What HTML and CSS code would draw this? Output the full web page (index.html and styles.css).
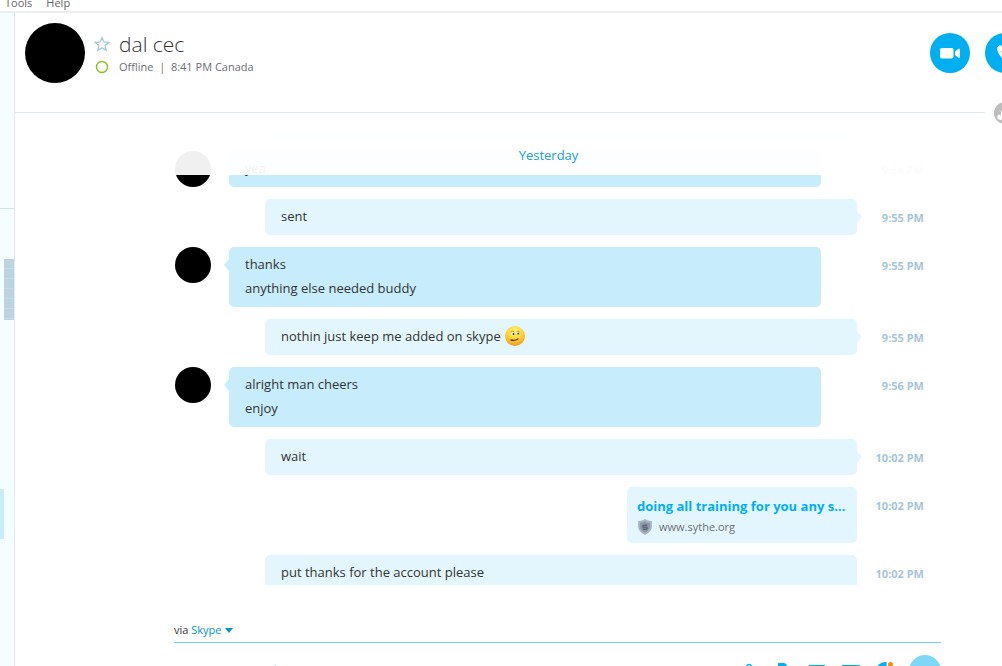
FILE: index.html
```html
<!DOCTYPE html>
<html lang="en">
<head>
<meta charset="utf-8">
<title>dal cec</title>
<link rel="stylesheet" href="styles.css">
</head>
<body>
<div class="app">
  <nav class="menubar">
    <button class="menu-item" type="button">Tools</button>
    <button class="menu-item" type="button">Help</button>
  </nav>
  <div class="workspace">
    <aside class="sidebar">
      <div class="sidebar-top"></div>
      <div class="scroll-thumb"></div>
      <div class="selected-contact"></div>
    </aside>
    <main class="chat">
      <header class="chat-header">
        <div class="avatar avatar-large"></div>
        <div class="contact">
          <svg class="mark" viewBox="0 0 16 16"><path d="M8 1.600 9.900 6l4.800.4-3.600 3.100 1.100 4.800L8 11.700l-4.200 2.600 1.100-4.800-3.600-3.100L6.100 6z" fill="none" stroke="#a5c9d9" stroke-width="1.300"/></svg>
          <h1 class="name">dal cec</h1>
          <svg class="mark" viewBox="0 0 16 16"><circle cx="8" cy="8" r="5.500" fill="none" stroke="#8cc11c" stroke-width="1.400"/></svg>
          <p class="status">Offline&nbsp; |&nbsp; 8:41 PM Canada</p>
        </div>
        <div class="calls">
          <button class="call" type="button" aria-label="Video call">
            <svg viewBox="0 0 40 40"><rect x="10" y="15" width="13.500" height="10.500" rx="1.800" fill="#fff"/><path d="M25 18.500 28.500 15.800Q30 15.500 30 16.500V24q0 1-1.500.7L25 22z" fill="#fff"/></svg>
          </button>
          <button class="call" type="button" aria-label="Call">
            <svg viewBox="0 0 40 40"><path d="M14.500 12.200c-1.800 1-2.600 2.300-2.300 4.300.8 5.500 5.500 10.500 11.300 11.500 2 .3 3.500-.6 4.300-2.300.3-.7.100-1.200-.5-1.600l-3-1.800c-.6-.4-1.200-.3-1.600.2l-1.100 1.300c-2.600-1.200-4.400-3-5.400-5.500l1.400-1.100c.5-.4.600-1 .3-1.600l-1.700-3c-.4-.6-1-.7-1.700-.4z" fill="#fff"/></svg>
          </button>
        </div>
        <svg class="badge" viewBox="0 0 22 22"><circle cx="11" cy="11" r="11" fill="#bdbdbd"/><path d="M4 17q-2-3 1-4.500l2 1V9l3-3 1 2v9q-4 2-7 0z" fill="#fff"/></svg>
      </header>

      <section class="stream" aria-label="Messages">
        <div class="day">Yesterday</div>
        <div class="row mine"><div class="bubble bubble-end"></div></div>
        <div class="row theirs"><div class="avatar"></div><div class="bubble tail-left"><p>yea</p></div><time>9:54 PM</time></div>
        <div class="row mine"><div class="bubble tail-right"><p>sent</p></div><time>9:55 PM</time></div>
        <div class="row theirs"><div class="avatar"></div><div class="bubble tail-left"><p>thanks</p><p>anything else needed buddy</p></div><time>9:55 PM</time></div>
        <div class="row mine"><div class="bubble tail-right"><p class="with-emoji">nothin just keep me added on skype
          <svg class="emoji" viewBox="0 0 20 20" role="img" aria-label="wink">
            <defs><radialGradient id="face" cx=".5" cy=".25" r=".8"><stop offset="0" stop-color="#fff27a"/><stop offset=".55" stop-color="#fdd02f"/><stop offset="1" stop-color="#ef8f1c"/></radialGradient></defs>
            <circle cx="10" cy="10" r="10" fill="url(#face)"/>
            <ellipse cx="8" cy="7.800" rx="1.900" ry="1.500" fill="#fff"/><circle cx="8.500" cy="8" r="1" fill="#39240c"/>
            <ellipse cx="13" cy="7.600" rx="1.700" ry="1.100" fill="#fff"/><circle cx="13.300" cy="7.700" r=".9" fill="#39240c"/>
            <path d="M6 14q4 .9 7-1" fill="none" stroke="#59350c" stroke-width="1.300" stroke-linecap="round"/>
            <path d="M6 5.800q1.500-1 3-.4M12 5.600q1.300-.5 2.500.2" fill="none" stroke="#a8741a" stroke-width=".7" stroke-linecap="round"/>
          </svg></p></div><time>9:55 PM</time></div>
        <div class="row theirs"><div class="avatar"></div><div class="bubble tail-left"><p>alright man cheers</p><p>enjoy</p></div><time>9:56 PM</time></div>
        <div class="row mine"><div class="bubble tail-right"><p>wait</p></div><time>10:02 PM</time></div>
        <div class="row mine">
          <div class="bubble link-card">
            <a class="link-title" href="#">doing all training for you any service</a>
            <div class="link-site">
              <svg class="shield" viewBox="0 0 16 16"><path d="M8 0q3 2.300 7 2-.3 3 0 5.500Q14.500 13 8 16 1.500 13 1 7.500 1.300 5 1 2q4 .3 7-2z" fill="#a9b4c2"/><path d="M8 2.200q2.500 1.500 5 1.500v4Q12.500 11.500 8 13.800 3.500 11.500 3 7.700v-4q2.500 0 5-1.500z" fill="#8d99ab"/><path d="M10.300 6.300H7q-1.300 0-1.300 1T7 8.200h2q1.300 0 1.300 1t-1.300 1H5.700" fill="none" stroke="#5c6678" stroke-width="1.400"/></svg>
              <span>www.sythe.org</span>
            </div>
          </div>
          <time>10:02 PM</time>
        </div>
        <div class="row mine"><div class="bubble"><p>put thanks for the account please</p></div><time>10:02 PM</time></div>
      </section>

      <footer class="composer">
        <div class="via">via <button class="via-button" type="button">Skype <svg class="caret" viewBox="0 0 8 5"><path d="M0 0h8L4 5z" fill="#0095cc"/></svg></button></div>
        <div class="entry">
          <input class="entry-box" type="text" placeholder="Type a message here" aria-label="Message">
          <div class="tools">
            <button class="tool" type="button" aria-label="Attach"><svg viewBox="0 0 20 20"><path d="M7.500 14V5a2.500 2.500 0 0 1 5 0V14" fill="none" stroke="#00aff0" stroke-width="1.300"/></svg></button>
            <button class="tool" type="button" aria-label="Contact"><svg viewBox="0 0 20 20"><path d="M5 1h6q2.500 0 3.500 4v4q0 4-4 4T6 9V4H5z" fill="#00aff0"/></svg></button>
            <button class="tool" type="button" aria-label="Picture"><svg viewBox="0 0 20 20"><rect x="2.500" y="3.500" width="15" height="12" fill="none" stroke="#00aff0"/></svg></button>
            <button class="tool" type="button" aria-label="Video message"><svg viewBox="0 0 20 20"><rect x="1.500" y="3.500" width="17" height="12" fill="none" stroke="#00aff0"/></svg></button>
            <button class="tool" type="button" aria-label="Emoticons"><svg viewBox="0 0 20 20"><circle cx="10" cy="9" r="9" fill="#00aff0"/><circle cx="15" cy="2.500" r="3.500" fill="#fff"/><circle cx="15.500" cy="2.500" r="2.500" fill="#ff8c00"/></svg></button>
          </div>
          <button class="send" type="button" aria-label="Send"></button>
        </div>
      </footer>
    </main>
  </div>
</div>
</body>
</html>
```
FILE: styles.css
```css
* { box-sizing: border-box; }
body {
  margin: 0;
  overflow: hidden;
  background: #fff;
  color: #333;
  font: 13px/24px "Open Sans", "Noto Sans", sans-serif;
}
h1, p { margin: 0; }
button, input { font: inherit; border: 0; padding: 0; background: none; }
svg { display: block; }
.app { display: flex; flex-direction: column; height: 100vh; overflow: hidden; }

.menubar {
  display: flex;
  flex: none;
  align-items: flex-end;
  gap: 14px;
  height: 13px;
  padding-left: 5px;
  border-bottom: 2px solid #eee;
  overflow: hidden;
}
.menu-item { color: #666; font-size: 11px; line-height: 16px; }

.workspace { display: flex; flex: 1; min-height: 0; }
.sidebar { flex: none; width: 15px; background: #f4fdff; border-right: 1px solid #e0eaf0; }
.sidebar-top { height: 196px; border-bottom: 1px solid #cfe6ea; }
.scroll-thumb {
  height: 61px;
  margin: 50px 0 169px 4px;
  background: repeating-linear-gradient(#bcd4e0 0 9px, #c4dbe6 9px 10px);
}
.selected-contact { width: 4px; height: 50px; background: #c7edfc; }

.chat { display: flex; flex: 1; flex-direction: column; min-width: 0; overflow: hidden; }
.chat-header {
  position: relative;
  z-index: 2;
  display: flex;
  flex: none;
  gap: 9px;
  height: 100px;
  margin-right: 17px;
  padding: 10px 0 0 10px;
  border-bottom: 1px solid #deeaf0;
}
.avatar { flex: none; width: 36px; height: 36px; border-radius: 50%; background: #000; }
.avatar-large { width: 60px; height: 60px; }
.contact {
  display: grid;
  flex: 1;
  grid-template-columns: 16px 1fr;
  grid-template-rows: 24px 22px;
  column-gap: 9px;
  align-content: start;
  align-items: center;
  padding-top: 9px;
}
.mark { width: 16px; height: 16px; }
.name { color: #333; font-size: 21px; font-weight: 300; line-height: 24px; }
.status { color: #6e6e78; font-size: 11px; line-height: 20px; white-space: nowrap; }
.calls { display: flex; flex: none; gap: 15px; margin-right: -40px; padding-top: 10px; }
.call { width: 40px; height: 40px; border-radius: 50%; background: #00aff0; }
.badge { position: absolute; right: -31px; bottom: -12px; width: 22px; height: 22px; }

.stream {
  position: relative;
  display: flex;
  flex: 1;
  flex-direction: column;
  gap: 12px;
  padding: 21px 78px 0 160px;
  overflow: hidden;
}
.day {
  position: absolute;
  inset: 0 0 auto;
  z-index: 1;
  height: 62px;
  padding: 30px 0 0 80px;
  background: rgba(255, 255, 255, 0.94);
  color: #1b9ed4;
  text-align: center;
}
.row { display: flex; flex: none; align-items: flex-start; }
.bubble {
  position: relative;
  flex: 1;
  min-width: 0;
  padding: 5px 16px 7px;
  border-radius: 5px;
  background: #e4f6fd;
}
.theirs .bubble { margin: 0 36px 0 18px; background: #c7ecfc; }
.mine .bubble { margin-left: 90px; }
.mine .bubble-end { height: 5px; margin-right: 67px; padding: 0; border-radius: 0 0 5px 5px; }
.tail-left::before, .tail-right::after {
  content: "";
  position: absolute;
  top: 12px;
  width: 5px;
  height: 12px;
}
.tail-left::before { left: -5px; background: #c7ecfc; clip-path: polygon(100% 0, 0 50%, 100% 100%); }
.tail-right::after { right: -5px; background: #e4f6fd; clip-path: polygon(0 0, 100% 50%, 0 100%); }
.row time {
  flex: none;
  width: 67px;
  padding-top: 7px;
  color: #a5c6d9;
  font-size: 11px;
  font-weight: 700;
  text-align: right;
}
.with-emoji { display: flex; align-items: center; gap: 4px; }
.emoji { width: 20px; height: 20px; }
.mine .link-card { flex: 0 1 230px; height: 56px; margin-left: auto; padding: 8px 10px; }
.link-title {
  display: block;
  overflow: hidden;
  color: #00aff0;
  font-weight: 700;
  line-height: 22px;
  text-decoration: none;
  text-overflow: ellipsis;
  white-space: nowrap;
}
.link-site { display: flex; align-items: center; gap: 6px; color: #6e6e78; font-size: 11px; line-height: 20px; }
.shield { width: 16px; height: 16px; }

.composer { flex: none; height: 81px; margin: 0 61px 0 159px; padding-top: 35px; overflow: hidden; }
.via { height: 23px; border-bottom: 1px solid #6bd0f5; font-size: 11px; line-height: 20px; }
.via-button { display: inline-flex; align-items: center; gap: 4px; color: #0095cc; }
.caret { width: 8px; height: 5px; }
.entry { display: flex; align-items: flex-start; padding-top: 12px; }
.entry-box { flex: 1; min-width: 0; height: 24px; margin-top: 3px; color: #333; outline: 0; }
.entry-box::placeholder { color: #7dd6f7; opacity: 1; }
.tools { display: flex; gap: 14px; margin: 7px 14px 0 0; }
.tool { width: 20px; height: 20px; }
.send { flex: none; width: 32px; height: 32px; border-radius: 50%; background: #7fd7f7; }
```
